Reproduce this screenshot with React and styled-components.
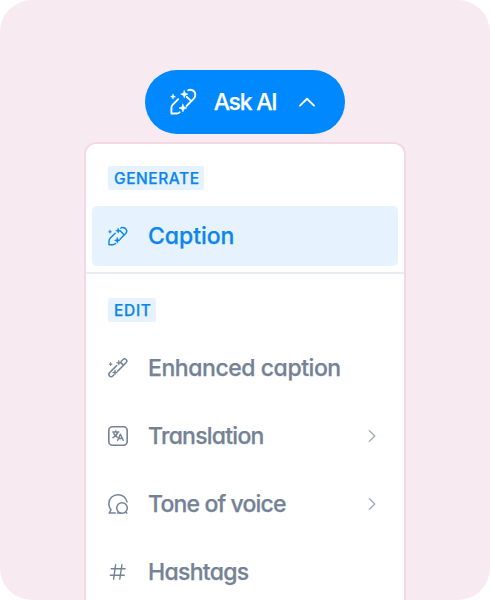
import React from "react";
import styled, { createGlobalStyle } from "styled-components";

const GlobalStyle = createGlobalStyle`
  * { box-sizing: border-box; }
  body { margin: 0; background: #fff; }
`;

const Stage = styled.main`
  width: 490px;
  height: 600px;
  padding-top: 70px;
  display: flex;
  flex-direction: column;
  align-items: center;
  gap: 8px;
  overflow: hidden;
  border-radius: 32px;
  background: #f8eaf1;
  font-family: Inter, "Liberation Sans", sans-serif;
  font-feature-settings: "cv11", "ss03";
  -webkit-text-stroke: 0.25px currentColor;
`;

const AskButton = styled.button`
  flex: none;
  width: 200px;
  height: 64px;
  padding: 0 28px 0 25px;
  display: flex;
  align-items: center;
  border: 0;
  border-radius: 32px;
  background: #0088ff;
  color: #fff;
  font: inherit;
  font-feature-settings: inherit;
`;

const AskText = styled.span`
  width: 66px;
  margin: 0 20px 0 13px;
  font-size: 23px;
  font-weight: 500;
  line-height: 32px;
  letter-spacing: -1.25px;
  white-space: nowrap;
`;

const Menu = styled.section`
  flex: none;
  width: 322px;
  height: 480px;
  border: 2px solid #f3d9e4;
  border-radius: 12px;
  background: #fff;
`;

const Group = styled.div`
  padding: 22px 6px 6px;
  display: flex;
  flex-direction: column;
  align-items: flex-start;

  & + & { border-top: 2px solid #e9ecf2; padding-top: 24px; }
`;

const Label = styled.div`
  height: 24px;
  width: ${({ $width }) => $width}px;
  margin: 0 0 16px 16px;
  padding-left: 6px;
  border-radius: 2px;
  background: #e6f3ff;
  color: #0c86ee;
  font-size: 15.5px;
  font-weight: 500;
  line-height: 25px;
  letter-spacing: ${({ $tracking }) => $tracking}px;
  white-space: nowrap;
`;

const Item = styled.div`
  width: 306px;
  height: 60px;
  margin-bottom: ${({ $active }) => ($active ? 0 : 8)}px;
  padding: 0 20px 0 16px;
  display: flex;
  align-items: center;
  border-radius: 5px;
  background: ${({ $active }) => ($active ? "#e6f3ff" : "transparent")};
  color: ${({ $active }) => ($active ? "#0c86ee" : "#748296")};
`;

const ItemText = styled.span`
  flex: 1;
  margin-left: 20px;
  font-size: 23px;
  font-weight: 500;
  line-height: 32px;
  letter-spacing: ${({ $tracking }) => $tracking}px;
  white-space: nowrap;
`;

const Icon = styled.svg`
  flex: none;
  display: block;
  width: ${({ $w }) => $w}px;
  height: ${({ $h }) => $h}px;
  fill: none;
  stroke: currentColor;
  stroke-linecap: round;
  stroke-linejoin: round;
  overflow: visible;
`;

const star = (x, y, r) => {
  const q = r * 0.28;
  return `M${x} ${y - r}L${x + q} ${y - q}L${x + r} ${y}L${x + q} ${y + q}L${x} ${y + r}L${x - q} ${y + q}L${x - r} ${y}L${x - q} ${y - q}Z`;
};

const WandLarge = () => (
  <Icon $w={29} $h={28} viewBox="0 0 29 28" strokeWidth="1.9">
    <path d="M8.2 11.2 2.8 16.6Q1.4 18 1.4 20V25.5H6.7Q8.4 25.5 9.6 24.3M16.5 18 24 10.4Q25.6 8.6 25.3 6.2 24.9 2.8 21.7 2 19.6 1.5 18.2 2.3M16.8 8.8l4.1 4.1" />
    <g fill="currentColor" strokeWidth=".6">
      <path d={star(3, 8.7, 2.4)} />
      <path d={star(14.3, 6.2, 3.6)} />
      <path d={star(12.9, 20, 3.9)} />
    </g>
  </Icon>
);

const WandMedium = () => (
  <Icon $w={20} $h={20} viewBox="0 0 20 20" strokeWidth="1.45">
    <path d="M7.2 7.2 2.4 12Q1 13.4 1 15V18.8H4.6Q6.4 18.8 7.6 17.6M12 13.3 17.7 7.6Q19.5 5.6 18.2 3.4 16.8 1.1 13.8 1.5L12.8 2.1M12.4 5l3.4 3.4" />
    <g fill="currentColor" strokeWidth=".5">
      <path d={star(2, 5.8, 1.6)} />
      <path d={star(10.2, 4.7, 2.5)} />
      <path d={star(9.3, 14.4, 2.8)} />
    </g>
  </Icon>
);

const WandSlim = () => (
  <Icon $w={20} $h={20} viewBox="0 0 20 20" strokeWidth="1.5">
    <path d="M8.6 7.6 1.7 14.5C-.5 17 2.4 20 4.9 17.9L5.7 17M9.7 13.1 18 4.8C20.2 2.4 17.2-.5 14.8 1.7L13.2 3.3M12.6 4.4l3 3" />
    <g fill="currentColor" strokeWidth=".5">
      <path d={star(2.7, 6.2, 1.7)} />
      <path d={star(10.8, 4.8, 2.4)} />
      <path d={star(7, 14.6, 2.6)} />
    </g>
  </Icon>
);

const TranslateIcon = () => (
  <Icon $w={20} $h={20} viewBox="0 0 20 20" strokeWidth="1.6">
    <rect x=".8" y=".8" width="18.4" height="18.4" rx="3.8" />
    <path d="M4.8 6.1h6M7.7 4.9v1.2M9.7 6.3C9 9 7.3 10.4 5 11.6M5.9 7.4c.6 1.8 1.8 2.8 3.3 3.7M9.7 14.2l2.7-6 2.8 6M10.5 12.6h3.8" strokeWidth="1.5" />
  </Icon>
);

const ToneIcon = () => (
  <Icon $w={20} $h={20} viewBox="0 0 20 20" strokeWidth="1.5">
    <path d="M19 7.8C18 3.6 14.4.7 10.1.7 4.8.7.8 4.7.8 9.8c0 2.5.9 4.4 2.2 6L1.2 19h6" />
    <circle cx="14" cy="14" r="5.3" />
    <path d="M9.4 19h3M17.8 18.2l1 .9" />
  </Icon>
);

const HashIcon = () => (
  <Icon $w={20} $h={20} viewBox="0 0 20 20" strokeWidth="1.4">
    <path d="M3.2 6.7h13.9M2.4 13.2h13.9M7.6 2.8 5.6 17.2M13.9 2.8l-2.1 14.4" />
  </Icon>
);

const ChevronUp = () => (
  <Icon $w={18} $h={10} viewBox="0 0 18 10" strokeWidth="2">
    <path d="m2 8.6 7-6.8 7 6.8" />
  </Icon>
);

const ChevronRight = () => (
  <Icon $w={12} $h={14} viewBox="0 0 12 14" strokeWidth="1.5" opacity=".65">
    <path d="m3.4 1.7 5.4 5.3-5.4 5.3" />
  </Icon>
);

const edits = [
  { text: "Enhanced caption", icon: WandSlim, tracking: -0.44 },
  { text: "Translation", icon: TranslateIcon, tracking: -0.76, more: true },
  { text: "Tone of voice", icon: ToneIcon, tracking: -0.84, more: true },
  { text: "Hashtags", icon: HashIcon, tracking: -0.7 },
];

export default function App() {
  return (
    <>
      <GlobalStyle />
      <Stage>
        <AskButton>
          <WandLarge />
          <AskText>Ask AI</AskText>
          <ChevronUp />
        </AskButton>
        <Menu>
          <Group>
            <Label $width={96} $tracking={0.55}>GENERATE</Label>
            <Item $active>
              <WandMedium />
              <ItemText $tracking={-0.05}>Caption</ItemText>
            </Item>
          </Group>
          <Group>
            <Label $width={48} $tracking={0.7}>EDIT</Label>
            {edits.map(({ text, icon: Glyph, tracking, more }) => (
              <Item key={text}>
                <Glyph />
                <ItemText $tracking={tracking}>{text}</ItemText>
                {more && <ChevronRight />}
              </Item>
            ))}
          </Group>
        </Menu>
      </Stage>
    </>
  );
}
